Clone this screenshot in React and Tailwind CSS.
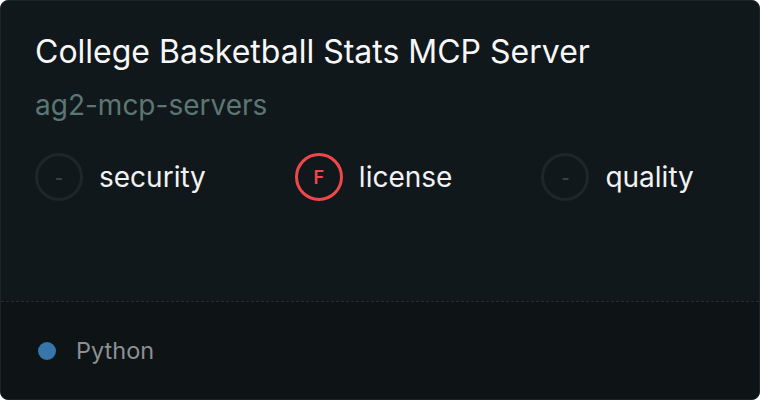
const scores = [
  { label: 'security', grade: '-', tone: 'none' },
  { label: 'license', grade: 'F', tone: 'bad' },
  { label: 'quality', grade: '-', tone: 'none' }
];

function Badge({ grade, tone }) {
  const ring = tone === 'bad' ? 'border-[#f04848] text-[#f04848]' : 'border-[#1f2629] text-[#3a4245]';
  return (
    <div className={`flex h-12 w-12 items-center justify-center rounded-full border-[3px] text-[18px] font-semibold ${ring}`}>
      {grade}
    </div>
  );
}

export default function App() {
  return (
    <div className="h-[400px] w-[760px] bg-white" style={{ fontFamily: 'Inter, "Noto Sans", sans-serif' }}>
      <div className="flex h-full flex-col overflow-hidden rounded-lg border border-[#1d2427] bg-[#11181b]">
        <div className="flex-1 px-[34px] pt-[31px]">
          <h1 className="text-[32px] leading-[40px] text-[#f7f7f7]">College Basketball Stats MCP Server</h1>
          <p className="mt-[15px] text-[28px] leading-[36px] text-[#5c7673]">ag2-mcp-servers</p>
          <div className="mt-[30px] flex items-center gap-[89px]">
            {scores.map((s) => (
              <div key={s.label} className="flex items-center gap-4">
                <Badge grade={s.grade} tone={s.tone} />
                <span className="text-[28px] text-[#f2f2f2]">{s.label}</span>
              </div>
            ))}
          </div>
        </div>
        <div className="flex h-[98px] items-center gap-[20px] border-t border-dashed border-[#262e31] bg-[#0e1316] px-[37px]">
          <span className="h-[18px] w-[18px] rounded-full bg-[#3776ab]" />
          <span className="text-[23.5px] text-[#8b9092]">Python</span>
        </div>
      </div>
    </div>
  );
}
